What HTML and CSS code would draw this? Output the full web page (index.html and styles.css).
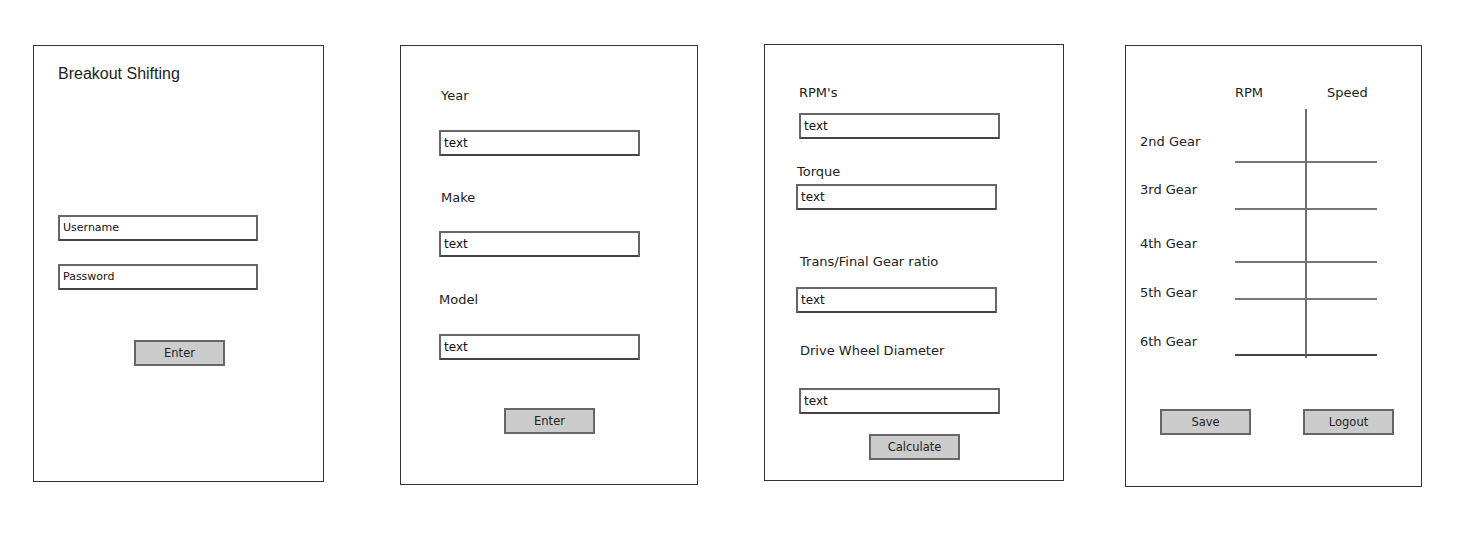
FILE: index.html
```html
<!DOCTYPE html>
<html lang="en">
<head>
<meta charset="utf-8">
<title>Breakout Shifting – wireframes</title>
<link rel="stylesheet" href="styles.css">
</head>
<body>
<main class="board">
  <section class="screen screen-login">
    <h1 class="app-title">Breakout Shifting</h1>
    <div class="field field-user">Username</div>
    <div class="field field-pass">Password</div>
    <div class="btn btn-login">Enter</div>
  </section>

  <section class="screen screen-car">
    <div class="label lbl-year">Year</div>
    <div class="field f-year">text</div>
    <div class="label lbl-make">Make</div>
    <div class="field f-make">text</div>
    <div class="label lbl-model">Model</div>
    <div class="field f-model">text</div>
    <div class="btn btn-car">Enter</div>
  </section>

  <section class="screen screen-calc">
    <div class="label lbl-rpm">RPM's</div>
    <div class="field f-rpm">text</div>
    <div class="label lbl-torque">Torque</div>
    <div class="field f-torque">text</div>
    <div class="label lbl-trans">Trans/Final Gear ratio</div>
    <div class="field f-trans">text</div>
    <div class="label lbl-drive">Drive Wheel Diameter</div>
    <div class="field f-drive">text</div>
    <div class="btn btn-calc">Calculate</div>
  </section>

  <section class="screen screen-result">
    <div class="gear-table">
      <div class="gt-head"></div>
      <div class="label gt-head gt-rpm">RPM</div>
      <div class="label gt-head gt-speed">Speed</div>

      <div class="label gear g2">2nd Gear</div>
      <div class="cell"></div>
      <div class="cell cell-speed"></div>

      <div class="label gear g3">3rd Gear</div>
      <div class="cell"></div>
      <div class="cell cell-speed"></div>

      <div class="label gear g4">4th Gear</div>
      <div class="cell"></div>
      <div class="cell cell-speed"></div>

      <div class="label gear g5">5th Gear</div>
      <div class="cell"></div>
      <div class="cell cell-speed"></div>

      <div class="label gear g6">6th Gear</div>
      <div class="cell cell-last"></div>
      <div class="cell cell-speed cell-last"></div>

      <div></div>
      <div></div>
      <div class="cell-speed tail"></div>
    </div>
    <div class="actions">
      <div class="btn">Save</div>
      <div class="btn">Logout</div>
    </div>
  </section>
</main>
</body>
</html>
```

FILE: styles.css
```css
* { box-sizing: border-box; }

html, body {
  margin: 0;
  padding: 0;
  background: #ffffff;
}

body {
  width: 1459px;
  height: 537px;
  overflow: hidden;
  font-family: "DejaVu Sans", "Noto Sans", sans-serif;
  color: #222;
}

.board {
  display: flex;
  align-items: flex-start;
  padding: 44px 0 0 33px;
}

.screen {
  display: flex;
  flex-direction: column;
  align-items: flex-start;
  border: 1px solid #333;
  background: #fff;
}

/* ---------- shared widgets ---------- */
.label {
  font-size: 13px;
  line-height: 16px;
  color: #222;
  white-space: nowrap;
}

.field {
  width: 201px;
  height: 26px;
  border: 2px solid #666;
  border-bottom-color: #444;
  border-radius: 1px;
  padding-left: 3px;
  font-size: 12px;
  line-height: 22px;
  color: #111;
  background: #fff;
}

.btn {
  width: 91px;
  height: 26px;
  border: 2px solid #666;
  background: #cccccc;
  font-size: 11.5px;
  line-height: 22px;
  text-align: center;
  color: #222;
}

/* ---------- screen 1: login ---------- */
.screen-login {
  width: 291px;
  height: 437px;
  margin-top: 1px;
  padding: 19px 0 0 24px;
}

.app-title {
  margin: 0;
  font-family: "Liberation Sans", Arial, sans-serif;
  font-weight: normal;
  font-size: 16px;
  line-height: 18px;
  color: #222;
}

.screen-login .field {
  width: 200px;
  font-size: 11px;
}

.field-user { margin-top: 132px; }
.field-pass { margin-top: 23px; }
.btn-login {
  margin-top: 50px;
  margin-left: 76px;
}

/* ---------- screen 2: car ---------- */
.screen-car {
  width: 298px;
  height: 440px;
  margin-left: 76px;
  margin-top: 1px;
  padding: 42px 0 0 38px;
}

.lbl-year { margin-left: 2px; }
.f-year { margin-top: 26px; }
.lbl-make { margin-top: 34px; margin-left: 2px; }
.f-make { margin-top: 25px; }
.lbl-model { margin-top: 35px; }
.f-model { margin-top: 26px; }
.btn-car {
  margin-top: 48px;
  margin-left: 65px;
}

/* ---------- screen 3: calculator ---------- */
.screen-calc {
  width: 300px;
  height: 437px;
  margin-left: 66px;
  padding: 40px 0 0 31px;
}

.lbl-rpm { margin-left: 3px; }
.f-rpm { margin-top: 12px; margin-left: 3px; }
.lbl-torque { margin-top: 25px; margin-left: 1px; }
.f-torque { margin-top: 4px; }
.lbl-trans { margin-top: 44px; margin-left: 4px; }
.f-trans { margin-top: 17px; }
.lbl-drive { margin-top: 30px; margin-left: 4px; }
.f-drive { margin-top: 29px; margin-left: 3px; }
.btn-calc {
  margin-top: 20px;
  margin-left: 73px;
}

/* ---------- screen 4: results ---------- */
.screen-result {
  width: 297px;
  height: 442px;
  margin-left: 61px;
  margin-top: 1px;
  padding: 39px 0 0 14px;
}

.gear-table {
  display: grid;
  grid-template-columns: 95px 70px 72px;
  grid-template-rows: 24px 54px 47px 53px 37px 56px 2px;
}

.gt-head { align-self: start; }
.gt-speed { padding-left: 22px; }

.gear { align-self: end; }
.g2 { margin-bottom: 13px; }
.g3 { margin-bottom: 12px; }
.g4 { margin-bottom: 11px; }
.g5 { margin-bottom: -1px; }
.g6 { margin-bottom: 6px; }

.cell {
  border-bottom: 2px solid #777;
}
.cell-last {
  border-bottom-color: #444;
}
.cell-speed {
  border-left: 2px solid #6f6f6f;
}

.actions {
  display: flex;
  gap: 52px;
  margin-top: 51px;
  margin-left: 20px;
}
```
